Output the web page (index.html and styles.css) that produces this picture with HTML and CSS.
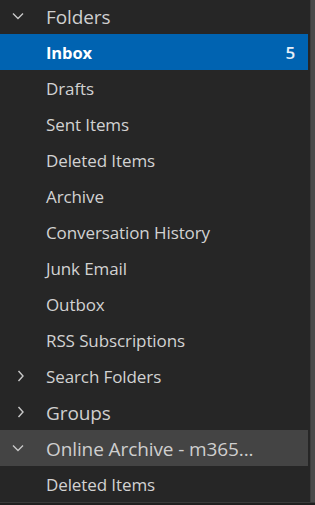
FILE: index.html
```html
<!DOCTYPE html>
<html>
<head>
<meta charset="utf-8">
<link rel="stylesheet" href="styles.css">
</head>
<body>
<div class="pane">
  <div class="list">
    <div class="row header">
      <span class="chev"><svg width="12" height="8" viewBox="0 0 12 8"><path d="M1 1.5 L6 6.5 L11 1.5" fill="none" stroke="#c8c8c8" stroke-width="1.4"/></svg></span>
      <span class="label">Folders</span>
    </div>
    <div class="row item selected"><span class="label">Inbox</span><span class="count">5</span></div>
    <div class="row item"><span class="label">Drafts</span></div>
    <div class="row item"><span class="label">Sent Items</span></div>
    <div class="row item"><span class="label">Deleted Items</span></div>
    <div class="row item"><span class="label">Archive</span></div>
    <div class="row item"><span class="label">Conversation History</span></div>
    <div class="row item"><span class="label">Junk Email</span></div>
    <div class="row item"><span class="label">Outbox</span></div>
    <div class="row item"><span class="label">RSS Subscriptions</span></div>
    <div class="row item sub">
      <span class="chev right"><svg width="7" height="12" viewBox="0 0 7 12"><path d="M1.5 1 L6 6 L1.5 11" fill="none" stroke="#c8c8c8" stroke-width="1.4"/></svg></span>
      <span class="label">Search Folders</span>
    </div>
    <div class="row header">
      <span class="chev right"><svg width="7" height="12" viewBox="0 0 7 12"><path d="M1.5 1 L6 6 L1.5 11" fill="none" stroke="#c8c8c8" stroke-width="1.4"/></svg></span>
      <span class="label">Groups</span>
    </div>
    <div class="row header hover">
      <span class="chev"><svg width="12" height="8" viewBox="0 0 12 8"><path d="M1 1.5 L6 6.5 L11 1.5" fill="none" stroke="#c8c8c8" stroke-width="1.4"/></svg></span>
      <span class="label">Online Archive - m365...</span>
    </div>
    <div class="row item"><span class="label">Deleted Items</span></div>
  </div>
  <div class="scrollbar"></div>
</div>
</body>
</html>
```
FILE: styles.css
```css
html, body {
  margin: 0;
  padding: 0;
  background: #1f1f1f;
  overflow: hidden;
}
.pane {
  width: 315px;
  height: 502px;
  background: #262626;
  display: flex;
  border-bottom: 1px solid #3a3a3a;
  overflow: hidden;
}
.list {
  flex: 1;
  display: flex;
  flex-direction: column;
  margin-top: -2px;
  margin-right: 2px;
}
.row {
  height: 36px;
  flex: none;
  display: flex;
  align-items: center;
  position: relative;
  padding-left: 46px;
  padding-right: 13px;
  padding-top: 1px;
  box-sizing: border-box;
  font-family: "Open Sans", "Noto Sans", sans-serif;
  color: #d2d2d2;
  font-size: 17px;
  letter-spacing: -0.1px;
}
.row.header {
  font-size: 19px;
  color: #cfcfcf;
}
.chev {
  position: absolute;
  left: 12px;
  top: 0;
  bottom: 0;
  display: flex;
  align-items: center;
}
.chev.right {
  left: 17px;
}
.label {
  flex: 1;
  white-space: nowrap;
}
.selected {
  background: #0063b1;
  color: #ffffff;
  font-weight: 700;
  font-size: 16.5px;
}
.count {
  font-weight: 600;
  font-size: 17px;
  color: #e8f0f8;
}
.hover {
  background: #444444;
}
.scrollbar {
  width: 4px;
  background: #4a4a4a;
  border-left: 1px solid #3e3e3e;
}
```
